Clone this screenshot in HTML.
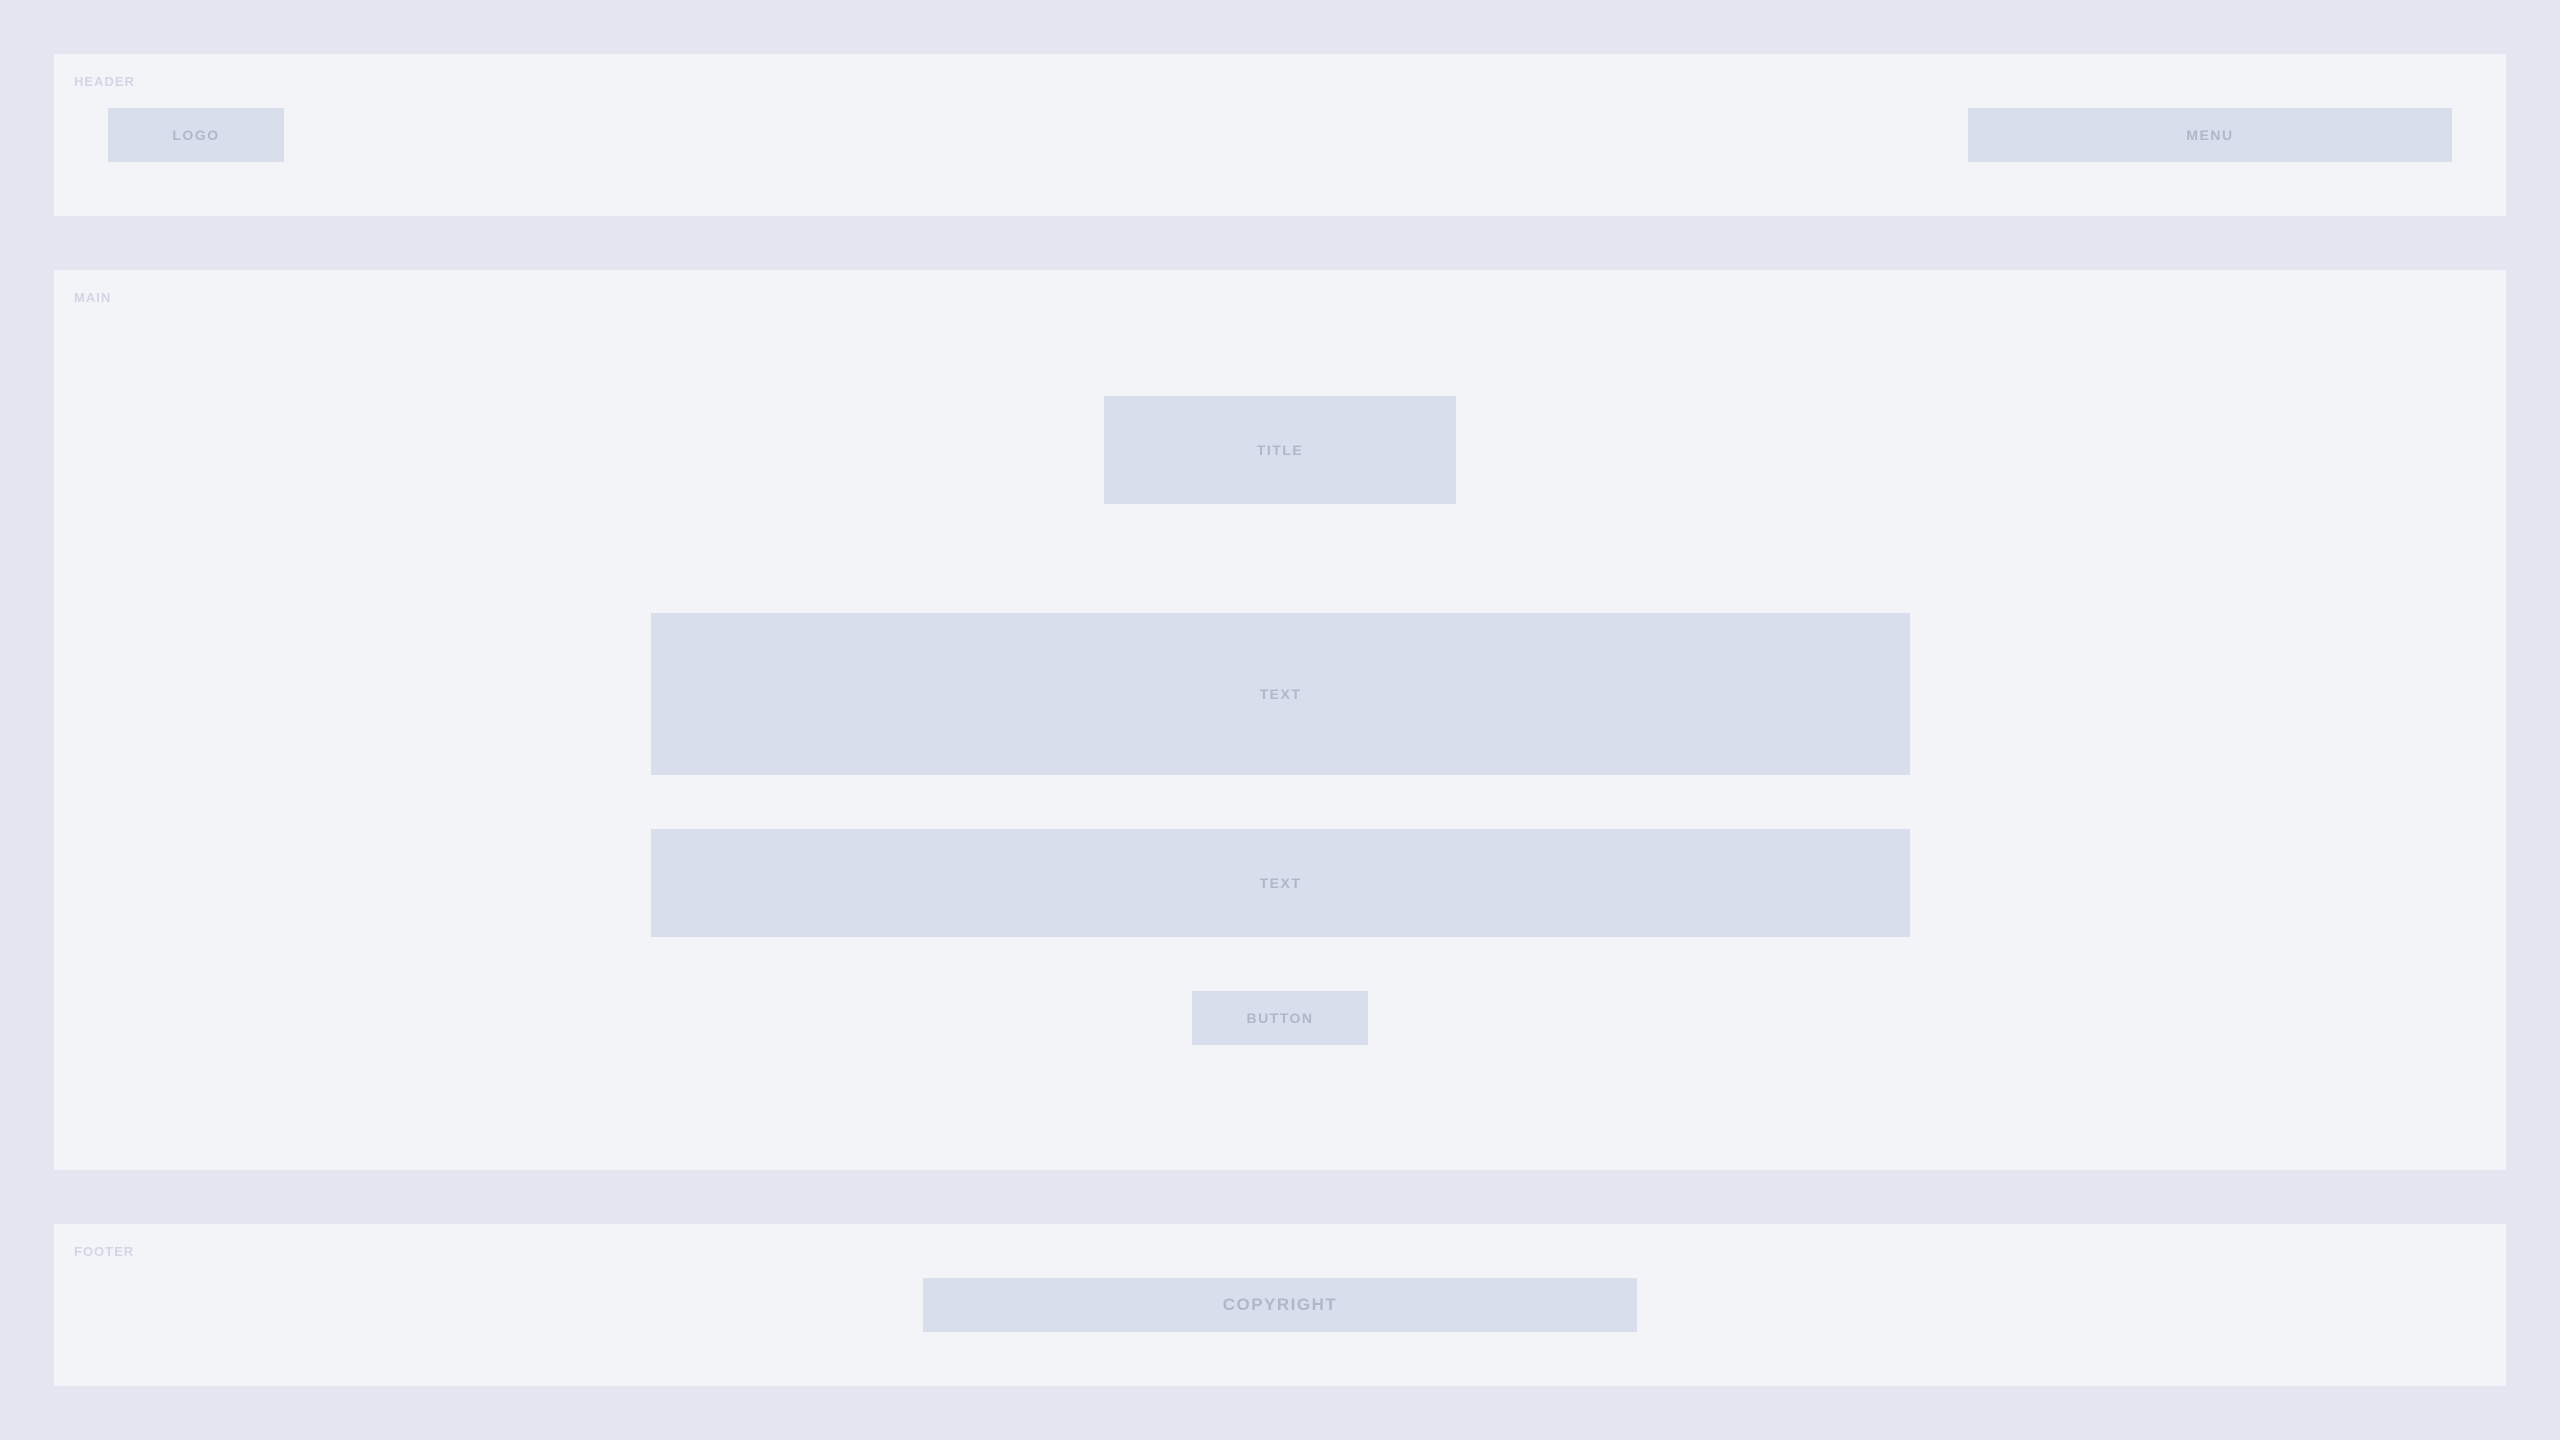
<!DOCTYPE html>
<html><head><meta charset="utf-8"><style>
*{margin:0;padding:0;box-sizing:border-box}
body{width:2560px;height:1440px;background:#e3e5f1;position:relative;overflow:hidden;font-family:"Liberation Sans",sans-serif;font-weight:bold}
.p{position:absolute;left:54px;width:2452px;background:#f3f4f8}
.l{position:absolute;left:20px;top:20px;font-size:13px;letter-spacing:1px;color:#d2d6e4}
.b{position:absolute;background:#d9deed;color:#b1b6ca;display:flex;align-items:center;justify-content:center;font-size:14px;letter-spacing:1.5px}
</style></head><body>
<div class="p" style="top:54px;height:162px"><div class="l">HEADER</div></div>
<div class="p" style="top:270px;height:900px"><div class="l">MAIN</div></div>
<div class="p" style="top:1224px;height:162px"><div class="l">FOOTER</div></div>
<div class="b" style="left:108px;top:108px;width:176px;height:54px">LOGO</div>
<div class="b" style="left:1968px;top:108px;width:484px;height:54px">MENU</div>
<div class="b" style="left:1104px;top:396px;width:352px;height:108px">TITLE</div>
<div class="b" style="left:651px;top:613px;width:1259px;height:162px">TEXT</div>
<div class="b" style="left:651px;top:829px;width:1259px;height:108px">TEXT</div>
<div class="b" style="left:1192px;top:991px;width:176px;height:54px">BUTTON</div>
<div class="b" style="left:923px;top:1278px;width:714px;height:54px;font-size:17px">COPYRIGHT</div>
</body></html>
